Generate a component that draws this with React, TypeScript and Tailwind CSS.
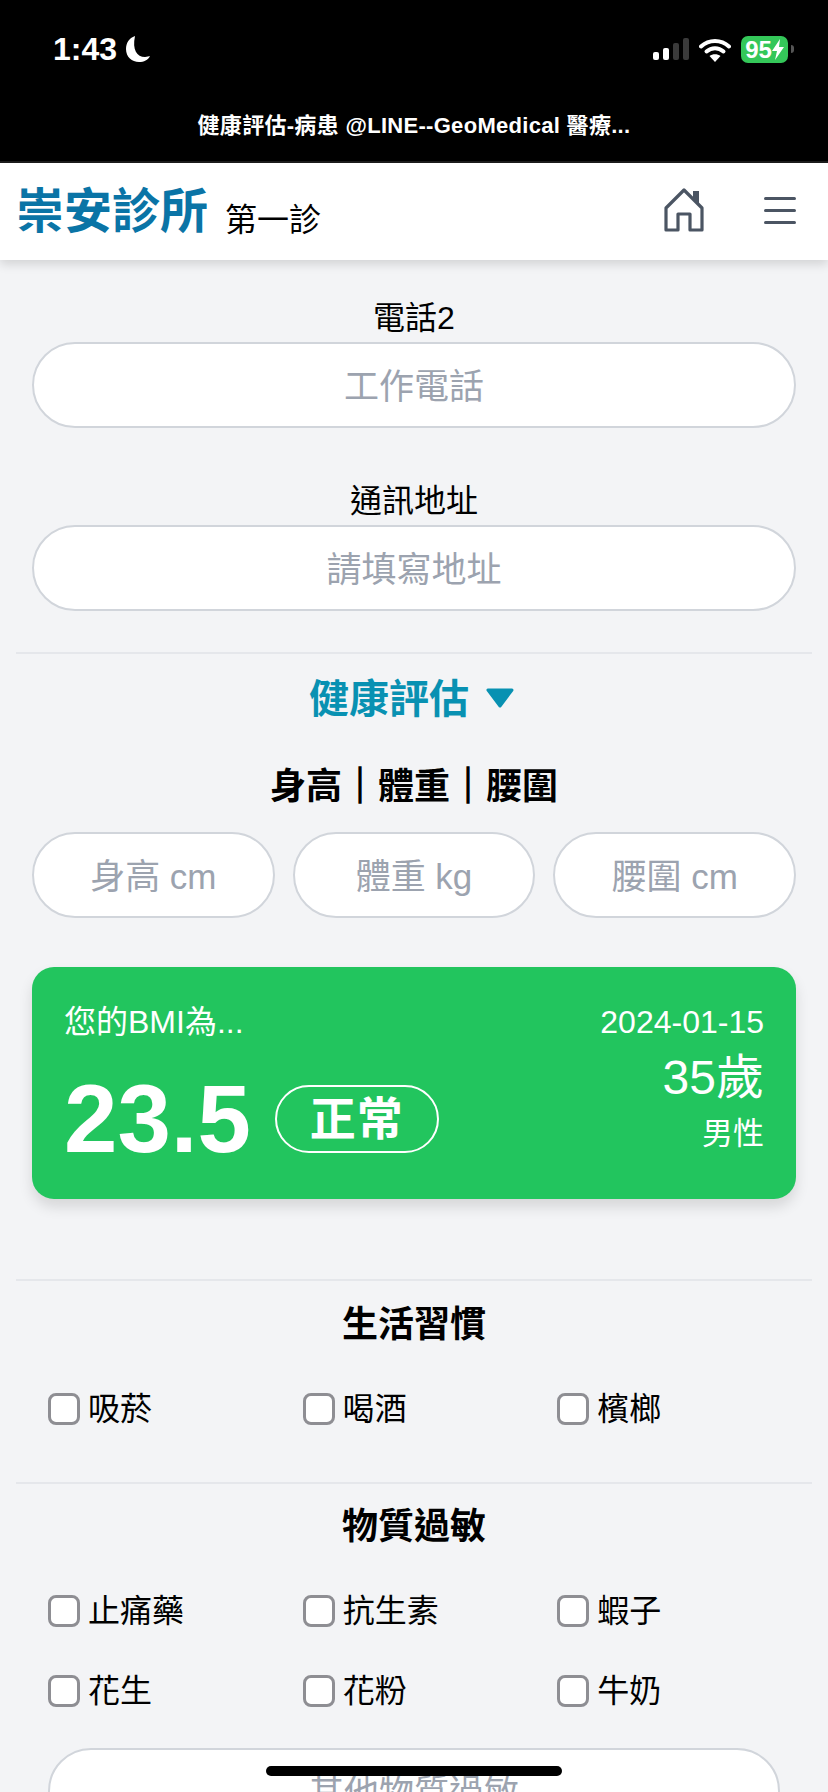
const font = { fontFamily: '"Liberation Sans", "Noto Sans CJK TC", sans-serif' };

function StatusBar() {
  return (
    <div className="h-[163px] bg-black text-white flex flex-col border-b-2 border-[#1c1c1c]">
      <div className="h-[112px] pt-[32px] pl-[53px] pr-[34px] flex items-start justify-between">
        <div className="flex items-center gap-[8px] h-[34px]">
          <span className="text-[32px] leading-[34px] font-bold">1:43</span>
          <svg width="26" height="28" viewBox="0 0 26 28">
            <path d="M10 1 C4 3 1 8 1 14 C1 22 7 27 14 27 C19 27 23 25 25 21 C24 21 22 22 20 22 C12 22 7 15 10 1 Z" fill="#fff" />
          </svg>
        </div>
        <div className="flex items-start">
          <div className="flex items-end gap-[4px] h-[22px] mt-[6px]">
            <div className="w-[6px] h-[8px] rounded-[2px] bg-white" />
            <div className="w-[6px] h-[12px] rounded-[2px] bg-white" />
            <div className="w-[6px] h-[17px] rounded-[2px] bg-[#3a3a3a]" />
            <div className="w-[6px] h-[22px] rounded-[2px] bg-[#3a3a3a]" />
          </div>
          <svg className="ml-[10px] mt-[6px]" width="32" height="24" viewBox="0 0 32 24">
            <path d="M2 8.5 C10 1 22 1 30 8.5" fill="none" stroke="#fff" strokeWidth="4" strokeLinecap="round" />
            <path d="M7.5 13.5 C12.5 9 19.5 9 24.5 13.5" fill="none" stroke="#fff" strokeWidth="4" strokeLinecap="round" />
            <path d="M16 24 L10.5 18 C13.5 15.5 18.5 15.5 21.5 18 Z" fill="#fff" />
          </svg>
          <div className="ml-[10px] mt-[4px] w-[47px] h-[27px] rounded-[7px] bg-[#34c759] flex items-center justify-center">
            <span className="text-[24px] leading-none font-bold">95</span>
            <svg width="12" height="21" viewBox="0 0 12 21">
              <path d="M8 0 L0 12 H5 L3 21 L12 8 H7 Z" fill="#fff" />
            </svg>
          </div>
          <div className="ml-[3px] mt-[13px] w-[3px] h-[8px] rounded-r-[3px] bg-[#555]" />
        </div>
      </div>
      <div className="text-center text-[22px] leading-[28px] font-bold tracking-[0.3px]">健康評估-病患 @LINE--GeoMedical 醫療...</div>
    </div>
  );
}

function NavBar() {
  return (
    <div className="h-[97px] bg-white shadow-[0_4px_10px_rgba(0,0,0,0.14)] relative flex items-center justify-between pl-[16px] pr-[32px]">
      <div className="flex items-end gap-[17px]">
        <span className="text-[48px] leading-[60px] font-bold text-[#0a74a6]">崇安診所</span>
        <span className="text-[32px] leading-[42px] text-black mb-[1px]">第一診</span>
      </div>
      <div className="flex items-center gap-[58px] pb-[3px]">
        <svg width="42" height="46" viewBox="0 0 42 46" fill="none">
          <path d="M2 21 L20 3 L38 21 V43 H26 V27 H14 V43 H2 Z" stroke="#4b5563" strokeWidth="3.2" strokeLinejoin="round" />
          <path d="M29 12 V4 H35 V18 Z" fill="#4b5563" />
        </svg>
        <div className="flex flex-col gap-[9px] w-[32px]">
          <div className="h-[3px] rounded-full bg-[#4b5563]" />
          <div className="h-[3px] rounded-full bg-[#4b5563]" />
          <div className="h-[3px] rounded-full bg-[#4b5563]" />
        </div>
      </div>
    </div>
  );
}

function TextField({ placeholder, className }: { placeholder: string; className?: string }) {
  return (
    <input
      readOnly
      placeholder={placeholder}
      className={`block h-[86px] min-w-0 pt-[3px] rounded-[43px] bg-white border-2 border-[#d1d5db] text-center text-[35px] outline-none placeholder:text-[#9ca3af] ${className ?? ""}`}
    />
  );
}

function Field({ label, placeholder }: { label: string; placeholder: string }) {
  return (
    <div>
      <div className="h-[48px] text-center text-[32px] leading-[48px] text-black">{label}</div>
      <TextField placeholder={placeholder} className="w-full" />
    </div>
  );
}

function CheckGrid({ items }: { items: string[] }) {
  return (
    <div className="grid grid-cols-3 gap-y-[48px] pl-[48px] pr-[16px]">
      {items.map((item) => (
        <label key={item} className="flex items-center gap-[8px] h-[32px]">
          <input type="checkbox" readOnly className="appearance-none w-[32px] h-[32px] bg-white border-[3px] border-[#8e8e93] rounded-[8px]" />
          <span className="text-[32px] leading-[32px] text-black">{item}</span>
        </label>
      ))}
    </div>
  );
}

function BmiCard() {
  return (
    <div className="h-[232px] mt-[49px] mx-[32px] rounded-[22px] bg-[#22c55e] shadow-[0_8px_14px_rgba(0,0,0,0.12)] text-white px-[32px] pt-[38px] flex justify-between">
      <div>
        <div className="text-[32px] leading-[34px]">您的BMI為...</div>
        <div className="flex items-center gap-[24px] mt-[38px]">
          <span className="text-[96px] leading-[84px] font-bold">23.5</span>
          <span className="w-[164px] h-[68px] rounded-[34px] border-2 border-white flex items-center justify-center text-[46px] font-bold leading-none tracking-[1px]">正常</span>
        </div>
      </div>
      <div className="flex flex-col items-end">
        <div className="text-[32px] leading-[34px]">2024-01-15</div>
        <div className="text-[48px] leading-[54px] mt-[12px]">35歲</div>
        <div className="text-[31px] leading-[36px] mt-[11px]">男性</div>
      </div>
    </div>
  );
}

export default function App() {
  return (
    <div style={font} className="relative h-[1792px] overflow-hidden bg-[#f3f4f6]">
      <StatusBar />
      <NavBar />

      <div className="px-[32px] pt-[34px]">
        <Field label="電話2" placeholder="工作電話" />
        <div className="h-[49px]" />
        <Field label="通訊地址" placeholder="請填寫地址" />
      </div>

      <div className="h-[2px] mx-[16px] mt-[41px] bg-[#e5e7eb]" />

      <div className="mt-[20px] flex items-center justify-center gap-[16px] h-[48px] pr-[4px]">
        <span className="text-[40px] leading-[48px] font-bold text-[#0891b2] translate-y-[1px]">健康評估</span>
        <svg width="30" height="20" viewBox="0 0 30 20">
          <path d="M3 2 H27 L15 18 Z" fill="#0891b2" stroke="#0891b2" strokeWidth="3" strokeLinejoin="round" />
        </svg>
      </div>

      <div className="mt-[41px] h-[48px] text-center text-[36px] leading-[48px] font-bold text-black">
        身高<span className="[-webkit-text-stroke:1.5px_black]">｜</span>體重<span className="[-webkit-text-stroke:1.5px_black]">｜</span>腰圍
      </div>

      <div className="mt-[21px] px-[32px] grid grid-cols-3 gap-[18px]">
        <TextField placeholder="身高 cm" className="w-full" />
        <TextField placeholder="體重 kg" className="w-full" />
        <TextField placeholder="腰圍 cm" className="w-full" />
      </div>

      <BmiCard />

      <div className="h-[2px] mx-[16px] mt-[80px] bg-[#e5e7eb]" />
      <div className="mt-[20px] h-[48px] text-center text-[36px] leading-[48px] font-bold text-black">生活習慣</div>
      <div className="mt-[44px]">
        <CheckGrid items={["吸菸", "喝酒", "檳榔"]} />
      </div>

      <div className="h-[2px] mx-[16px] mt-[57px] bg-[#e5e7eb]" />
      <div className="mt-[19px] h-[48px] text-center text-[36px] leading-[48px] font-bold text-black">物質過敏</div>
      <div className="mt-[44px]">
        <CheckGrid items={["止痛藥", "抗生素", "蝦子", "花生", "花粉", "牛奶"]} />
      </div>

      <div className="mt-[41px] px-[48px]">
        <TextField placeholder="其他物質過敏" className="w-full" />
      </div>

      <div className="absolute left-[266px] top-[1766px] w-[296px] h-[10px] rounded-full bg-black" />
    </div>
  );
}
